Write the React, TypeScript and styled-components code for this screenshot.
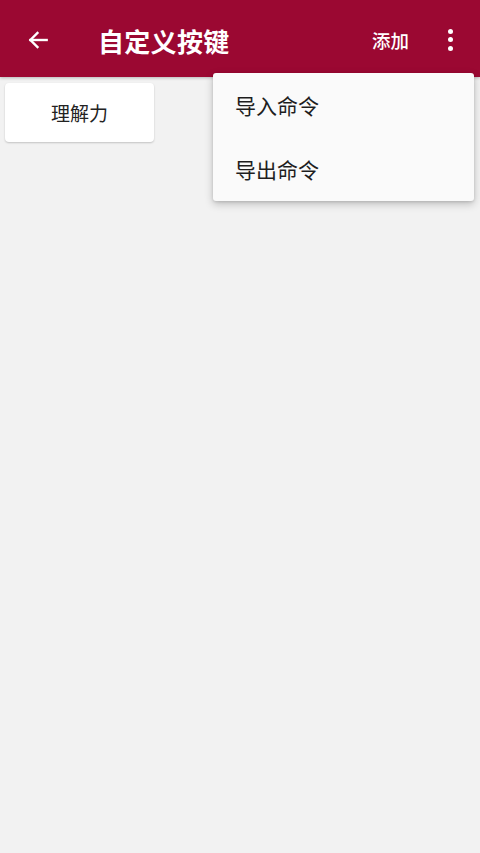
import React from "react";
import styled, { createGlobalStyle } from "styled-components";

const GlobalStyle = createGlobalStyle`
  html, body {
    margin: 0;
    padding: 0;
    background: #f2f2f2;
    font-family: Roboto, "Noto Sans CJK SC", sans-serif;
  }
`;

const Page = styled.div`
  position: relative;
  width: 480px;
  height: 853px;
  background: #f2f2f2;
  overflow: hidden;
`;

const AppBar = styled.header`
  height: 77px;
  background: #9b0832;
  display: flex;
  align-items: center;
  color: #fff;
  box-shadow: 0 1px 3px rgba(0, 0, 0, 0.25);
`;

const IconButton = styled.button`
  width: 48px;
  height: 48px;
  margin-left: 14px;
  margin-top: 2px;
  background: none;
  border: 0;
  padding: 0;
  display: flex;
  align-items: center;
  justify-content: center;
  color: #fff;
`;

const Title = styled.h1`
  margin: 3px 0 0 36px;
  font-size: 26px;
  font-weight: 700;
  flex: 1;
  letter-spacing: 0.3px;
`;

const Action = styled.span`
  font-size: 18.5px;
  font-weight: 500;
  margin: 2px 31px 0 0;
`;

const Overflow = styled.div`
  width: 20px;
  margin: 2px 20px 0 0;
  display: flex;
  flex-direction: column;
  align-items: center;
  gap: 3.5px;
`;

const Dot = styled.span`
  width: 5px;
  height: 5px;
  border-radius: 50%;
  background: #fff;
`;

const Content = styled.main`
  padding: 6px 5px;
`;

const KeyCard = styled.div`
  width: 149px;
  height: 59px;
  background: #fff;
  border-radius: 4px;
  box-shadow: 0 1px 2px rgba(0, 0, 0, 0.2);
  display: flex;
  align-items: center;
  justify-content: center;
  font-size: 19px;
  color: #222;
`;

const Menu = styled.ul`
  position: absolute;
  top: 73px;
  left: 213px;
  width: 261px;
  margin: 0;
  padding: 0;
  list-style: none;
  background: #fafafa;
  border-radius: 3px;
  box-shadow: 0 3px 8px rgba(0, 0, 0, 0.22), 0 1px 3px rgba(0, 0, 0, 0.12);
`;

const MenuItem = styled.li`
  height: 64px;
  padding-left: 22px;
  display: flex;
  align-items: center;
  font-size: 21px;
  color: #1e1e1e;
`;

export default function App() {
  return (
    <Page>
      <GlobalStyle />
      <AppBar>
        <IconButton aria-label="back">
          <svg width="26" height="26" viewBox="0 0 24 24" fill="none" stroke="#fff" strokeWidth="2.2" strokeLinecap="square">
            <path d="M20 12H5" />
            <path d="M11.5 5.5L5 12l6.5 6.5" />
          </svg>
        </IconButton>
        <Title>自定义按键</Title>
        <Action>添加</Action>
        <Overflow>
          <Dot />
          <Dot />
          <Dot />
        </Overflow>
      </AppBar>
      <Content>
        <KeyCard>理解力</KeyCard>
      </Content>
      <Menu>
        <MenuItem>导入命令</MenuItem>
        <MenuItem>导出命令</MenuItem>
      </Menu>
    </Page>
  );
}
